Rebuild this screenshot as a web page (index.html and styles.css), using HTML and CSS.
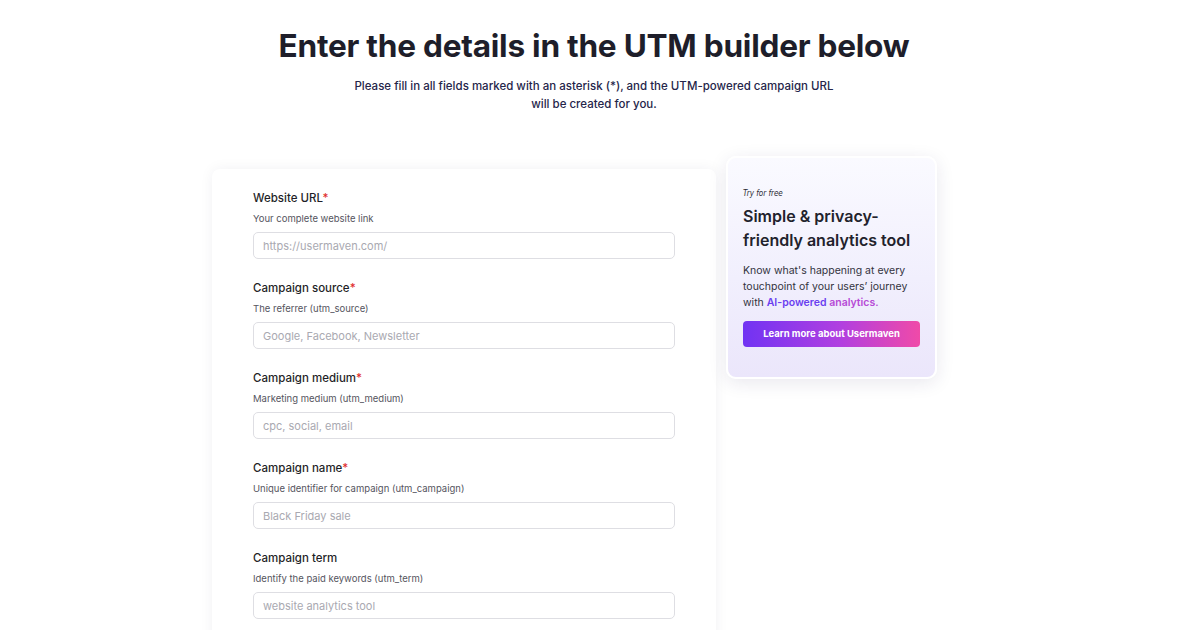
FILE: index.html
```html
<!DOCTYPE html>
<html lang="en">

<head>
    <meta charset="UTF-8">
    <meta name="viewport" content="width=device-width, initial-scale=1.0">
    <title>UTM builder</title>

    <link rel="stylesheet" href="styles.css">
</head>

<body>

    <header class="intro">
        <h1>Enter the details in the UTM builder below</h1>
        <p>Please fill in all fields marked with an asterisk (*), and the UTM-powered campaign URL<br>will be created for you.</p>
    </header>

    <main class="builder">
        <form class="form-card">
            <div class="field">
                <label for="url">Website URL<span class="req">*</span></label>
                <small>Your complete website link</small>
                <input type="text" id="url" placeholder="https://usermaven.com/">
            </div>
            <div class="field">
                <label for="source">Campaign source<span class="req">*</span></label>
                <small>The referrer (utm_source)</small>
                <input type="text" id="source" placeholder="Google, Facebook, Newsletter">
            </div>
            <div class="field">
                <label for="medium">Campaign medium<span class="req">*</span></label>
                <small>Marketing medium (utm_medium)</small>
                <input type="text" id="medium" placeholder="cpc, social, email">
            </div>
            <div class="field">
                <label for="name">Campaign name<span class="req">*</span></label>
                <small>Unique identifier for campaign (utm_campaign)</small>
                <input type="text" id="name" placeholder="Black Friday sale">
            </div>
            <div class="field">
                <label for="term">Campaign term</label>
                <small>Identify the paid keywords (utm_term)</small>
                <input type="text" id="term" placeholder="website analytics tool">
            </div>
        </form>

        <aside class="promo">
            <span class="try">Try for free</span>
            <h2>Simple &amp; privacy-friendly analytics tool</h2>
            <p>Know what's happening at every touchpoint of your users’ journey with <b class="ai">AI-powered <span class="ai-end">analytics.</span></b></p>
            <a class="promo-btn" href="#">Learn more about Usermaven</a>
        </aside>
    </main>

</body>

</html>
```

FILE: styles.css
```css
body {
    margin: 0;
    font-family: Inter, "Noto Sans", sans-serif;
    color: #1d1d27;
    background: #fff;
    overflow: hidden;
}

.intro {
    text-align: center;
    padding: 26px 12px 0 0;
}

.intro h1 {
    margin: 0;
    font-size: 31.6px;
    font-weight: 700;
    letter-spacing: -0.25px;
    color: #1e1e2a;
    line-height: 40px;
}

.intro p {
    margin: 11px 0 0;
    font-size: 11.5px;
    font-weight: 500;
    line-height: 18px;
    color: #25254a;
}

.builder {
    display: flex;
    align-items: flex-start;
    gap: 10px;
    margin-top: 43px;
    margin-left: 212px;
}

.form-card {
    width: 422px;
    padding: 22px 41px;
    border-radius: 8px;
    background: #fff;
    box-shadow: 0 0 14px rgba(30, 30, 60, 0.06);
    margin-top: 13px;
}

.field {
    display: flex;
    flex-direction: column;
    margin-bottom: 22px;
}

.field label {
    font-size: 11.5px;
    font-weight: 500;
    color: #1f1f28;
    line-height: 14px;
}

.req {
    color: #e02b2b;
}

.field small {
    font-size: 9.5px;
    color: #555560;
    margin-top: 8px;
    line-height: 12px;
}

.field input {
    margin-top: 7px;
    height: 27px;
    box-sizing: border-box;
    border: 1px solid #dedee3;
    border-radius: 5px;
    padding: 0 9px;
    font-family: inherit;
    font-size: 11px;
}

.field input::placeholder {
    color: #a9a9b1;
}

.promo {
    width: 211px;
    box-sizing: border-box;
    padding: 31px 15px 30px;
    border: 2px solid #fff;
    border-radius: 10px;
    background: linear-gradient(180deg, #fafaff 0%, #f1effd 55%, #ebe6fb 100%);
    box-shadow: 0 4px 18px rgba(40, 30, 90, 0.1);
}

.try {
    display: block;
    font-family: "DejaVu Sans Condensed", "DejaVu Sans", sans-serif;
    font-size: 8px;
    font-style: italic;
    color: #2a2a33;
}

.promo h2 {
    margin: 6px 0 0;
    font-size: 16px;
    font-weight: 600;
    line-height: 24px;
    color: #22222c;
}

.promo p {
    margin: 11px 0 0;
    font-size: 10.5px;
    line-height: 16px;
    color: #33333d;
}

.ai {
    font-weight: 600;
    color: #6a3ff0;
}

.ai-end {
    color: #b64ad6;
}

.promo-btn {
    display: block;
    margin-top: 10px;
    height: 26px;
    line-height: 26px;
    border-radius: 4px;
    text-align: center;
    font-size: 9.5px;
    font-weight: 700;
    color: #fff;
    text-decoration: none;
    background: linear-gradient(90deg, #7133f3 0%, #b13fe0 55%, #f04aa8 100%);
}
```
